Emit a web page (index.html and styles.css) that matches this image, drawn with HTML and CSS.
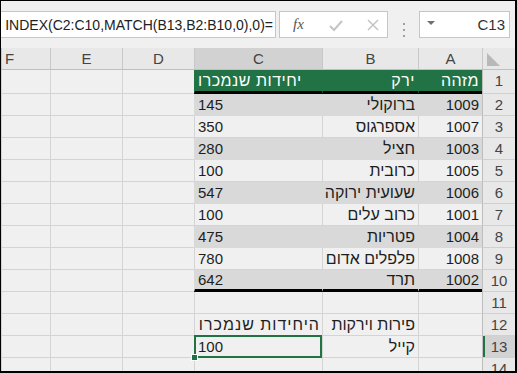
FILE: index.html
```html
<!DOCTYPE html>
<html lang="he">
<head>
    <meta charset="UTF-8">
    <title>Excel - INDEX MATCH</title>
    <link rel="stylesheet" href="styles.css">
</head>
<body>
    <div class="frame">
        <div class="toolbar">
            <div class="name-box">
                <span class="name-value">C13</span>
                <span class="name-arrow"></span>
            </div>
            <div class="sep">
                <span></span><span></span><span></span>
            </div>
            <div class="fx-box">
                <span class="fx">fx</span>
                <svg class="tick" width="16" height="14" viewBox="0 0 16 14"><polyline points="2,8 6,12 14,3" fill="none" stroke="#c4c4c4" stroke-width="2"/></svg>
                <svg class="cross" width="12" height="12" viewBox="0 0 12 12"><path d="M1 1 L11 11 M11 1 L1 11" stroke="#c4c4c4" stroke-width="1.5"/></svg>
            </div>
            <div class="formula-box">
                <span class="formula">INDEX(C2:C10,MATCH(B13,B2:B10,0),0)=</span>
            </div>
        </div>

        <div class="sheet">
            <div class="row heads">
                <div class="corner"><span class="tri"></span></div>
                <div class="col">A</div>
                <div class="col">B</div>
                <div class="col col-sel">C</div>
                <div class="col">D</div>
                <div class="col">E</div>
                <div class="col col-f">F</div>
            </div>

            <div class="row title">
                <div class="rh">1</div>
                <div class="c g num he">מזהה</div>
                <div class="c g txt he">ירק</div>
                <div class="c g val he">יחידות שנמכרו</div>
                <div class="c"></div>
                <div class="c"></div>
                <div class="c"></div>
            </div>

            <div class="row fill">
                <div class="rh">2</div>
                <div class="c num">1009</div>
                <div class="c txt he">ברוקולי</div>
                <div class="c val">145</div>
                <div class="c"></div><div class="c"></div><div class="c"></div>
            </div>
            <div class="row">
                <div class="rh">3</div>
                <div class="c num">1007</div>
                <div class="c txt he">אספרגוס</div>
                <div class="c val">350</div>
                <div class="c"></div><div class="c"></div><div class="c"></div>
            </div>
            <div class="row fill">
                <div class="rh">4</div>
                <div class="c num">1003</div>
                <div class="c txt he">חציל</div>
                <div class="c val">280</div>
                <div class="c"></div><div class="c"></div><div class="c"></div>
            </div>
            <div class="row">
                <div class="rh">5</div>
                <div class="c num">1005</div>
                <div class="c txt he">כרובית</div>
                <div class="c val">100</div>
                <div class="c"></div><div class="c"></div><div class="c"></div>
            </div>
            <div class="row fill">
                <div class="rh">6</div>
                <div class="c num">1006</div>
                <div class="c txt he">שעועית ירוקה</div>
                <div class="c val">547</div>
                <div class="c"></div><div class="c"></div><div class="c"></div>
            </div>
            <div class="row">
                <div class="rh">7</div>
                <div class="c num">1001</div>
                <div class="c txt he">כרוב עלים</div>
                <div class="c val">100</div>
                <div class="c"></div><div class="c"></div><div class="c"></div>
            </div>
            <div class="row fill">
                <div class="rh">8</div>
                <div class="c num">1004</div>
                <div class="c txt he">פטריות</div>
                <div class="c val">475</div>
                <div class="c"></div><div class="c"></div><div class="c"></div>
            </div>
            <div class="row">
                <div class="rh">9</div>
                <div class="c num">1008</div>
                <div class="c txt he">פלפלים אדום</div>
                <div class="c val">780</div>
                <div class="c"></div><div class="c"></div><div class="c"></div>
            </div>
            <div class="row fill last">
                <div class="rh">10</div>
                <div class="c num">1002</div>
                <div class="c txt he">תרד</div>
                <div class="c val">642</div>
                <div class="c"></div><div class="c"></div><div class="c"></div>
            </div>

            <div class="row">
                <div class="rh">11</div>
                <div class="c"></div><div class="c"></div><div class="c"></div>
                <div class="c"></div><div class="c"></div><div class="c"></div>
            </div>
            <div class="row">
                <div class="rh">12</div>
                <div class="c"></div>
                <div class="c txt he">פירות וירקות</div>
                <div class="c txt he wide">היחידות שנמכרו</div>
                <div class="c"></div><div class="c"></div><div class="c"></div>
            </div>
            <div class="row">
                <div class="rh rh-sel">13</div>
                <div class="c"></div>
                <div class="c txt he">קייל</div>
                <div class="c val active">100</div>
                <div class="c"></div><div class="c"></div><div class="c"></div>
            </div>
            <div class="row">
                <div class="rh">14</div>
                <div class="c"></div><div class="c"></div><div class="c"></div>
                <div class="c"></div><div class="c"></div><div class="c"></div>
            </div>
        </div>
    </div>
</body>
</html>
```

FILE: styles.css
```css
body {
    margin: 0;
    background: #fff;
    font-family: "Liberation Sans", "DejaVu Sans", sans-serif;
}

.frame {
    width: 517px;
    height: 373px;
    box-sizing: border-box;
    border: 1px solid #000;
    border-right-width: 2px;
    border-bottom-width: 2px;
    overflow: hidden;
    background: #f0f0f0;
    direction: rtl;
}

/* barra de fórmulas */
.toolbar {
    display: flex;
    height: 47px;
    box-sizing: border-box;
    padding: 10px 5px 0 0;
}

.name-box,
.fx-box,
.formula-box {
    height: 27px;
    box-sizing: border-box;
    background: #fff;
    border: 1px solid #c6c6c6;
}

.name-box {
    width: 91px;
    display: flex;
    align-items: center;
    justify-content: space-between;
    padding: 0 4px 0 7px;
}

.name-value {
    font-size: 15px;
    color: #333;
    direction: ltr;
}

.name-arrow {
    width: 0;
    height: 0;
    border-left: 4px solid transparent;
    border-right: 4px solid transparent;
    border-top: 4px solid #707070;
    margin-bottom: 3px;
}

.sep {
    width: 31px;
    display: flex;
    flex-direction: column;
    align-items: center;
    justify-content: center;
    gap: 4px;
}

.sep span {
    width: 2px;
    height: 2px;
    background: #a0a0a0;
}

.fx-box {
    width: 109px;
    margin-left: 3px;
    direction: ltr;
    display: flex;
    align-items: center;
    padding-left: 13px;
}

.fx {
    font-family: "Liberation Serif", serif;
    font-style: italic;
    font-size: 15px;
    color: #555;
    width: 30px;
}

.tick {
    margin-left: 5px;
}

.cross {
    margin-left: 23px;
}

.formula-box {
    flex: 1;
    border-left: none;
    overflow: hidden;
    display: flex;
    align-items: center;
    padding-right: 2px;
}

.formula {
    direction: ltr;
    white-space: nowrap;
    font-size: 14px;
    color: #222;
}

/* grade */
.row {
    display: grid;
    grid-template-columns: 33px 64px 96px 128px 72px 72px 1fr;
    height: 22px;
}

.row > div {
    box-sizing: border-box;
    border-left: 1px solid #d4d4d4;
    border-bottom: 1px solid #d4d4d4;
    padding: 0 3px;
    white-space: nowrap;
    font-size: 15px;
    line-height: 21px;
    color: #1e1e1e;
}

.row > .he {
    font-size: 16px;
}

.row > .wide {
    letter-spacing: 1px;
    padding-right: 2px;
}

.row.heads > div {
    background: #e8e8e8;
    border-left-color: #c8c8c8;
    border-bottom-color: #bfbfbf;
    text-align: center;
    color: #444;
}

.row.heads .col-sel {
    background: #d2d2d2;
}

.row.heads .col-f {
    text-align: left;
}

.corner {
    position: relative;
}

.tri {
    position: absolute;
    left: 4px;
    bottom: 3px;
    width: 0;
    height: 0;
    border-bottom: 13px solid #b8b8b8;
    border-right: 13px solid transparent;
}

.row > .rh {
    background: #e8e8e8;
    border-left-color: #bdbdbd;
    border-bottom-color: #d0d0d0;
    text-align: center;
    padding: 0;
    color: #444;
}

.row > .rh-sel {
    background: #d2d2d2;
    box-shadow: inset 2px 0 0 #217346;
}

.num,
.txt {
    text-align: right;
}

.val {
    text-align: left;
}

.row.title {
    height: 24px;
}

.row.title > .g {
    background: #217346;
    color: #fff;
    letter-spacing: 0.5px;
    border-left-color: #217346;
    border-bottom: 3px solid #000;
}

.row.fill > .c:nth-child(-n+4) {
    background: #d9d9d9;
    border-left-color: #d9d9d9;
    border-bottom-color: #d9d9d9;
}

.row.last > .c:nth-child(-n+4) {
    border-bottom: 3px solid #000;
    line-height: 19px;
}

.active {
    position: relative;
}

.active::after {
    content: "";
    position: absolute;
    top: -1px;
    left: -1px;
    right: 0;
    bottom: -1px;
    border: 2px solid #217346;
}

.active::before {
    content: "";
    position: absolute;
    left: -4px;
    bottom: -4px;
    width: 5px;
    height: 5px;
    background: #217346;
    border: 1px solid #fff;
    z-index: 1;
}
```
